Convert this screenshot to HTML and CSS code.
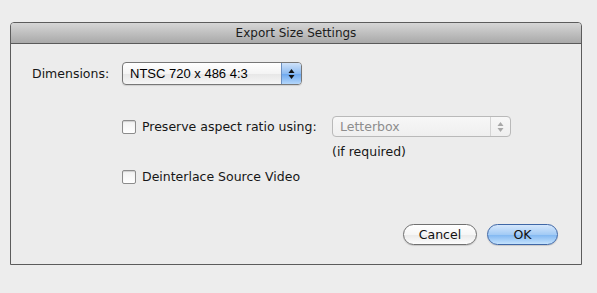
FILE: index.html
```html
<!DOCTYPE html>
<html lang="en">
<head>
    <meta charset="UTF-8">
    <title>Export Size Settings</title>
    <link rel="stylesheet" href="styles.css">
</head>
<body>
    <div class="window">
        <div class="titlebar">Export Size Settings</div>

        <div class="content">
            <div class="dims-row">
                <label class="dims-label">Dimensions:</label>
                <div class="popup">
                    <span class="popup-text">NTSC 720 x 486 4:3</span>
                    <span class="stepper">
                        <svg width="7" height="12" viewBox="0 0 7 12">
                            <path d="M3.5 1 L6.5 5 L0.5 5 Z" fill="#111"/>
                            <path d="M3.5 11 L6.5 7 L0.5 7 Z" fill="#111"/>
                        </svg>
                    </span>
                </div>
            </div>

            <div class="options">
                <label class="check">
                    <span class="box"></span>
                    Preserve aspect ratio using:
                </label>
                <div class="popup disabled">
                    <span class="popup-text">Letterbox</span>
                    <span class="stepper">
                        <svg width="7" height="12" viewBox="0 0 7 12">
                            <path d="M3.5 1 L6.5 5 L0.5 5 Z" fill="#a8a8a8"/>
                            <path d="M3.5 11 L6.5 7 L0.5 7 Z" fill="#a8a8a8"/>
                        </svg>
                    </span>
                </div>
                <div></div>
                <div class="hint">(if required)</div>
                <label class="check second">
                    <span class="box"></span>
                    Deinterlace Source Video
                </label>
            </div>

            <div class="buttons">
                <button class="btn">Cancel</button>
                <button class="btn default">OK</button>
            </div>
        </div>
    </div>
</body>
</html>
```

FILE: styles.css
```css
body {
    margin: 0;
    padding: 22px 0 0 10px;
    background-color: #ededed;
    font-family: "DejaVu Sans", sans-serif;
    font-size: 12.5px;
    color: #161616;
}
.window {
    width: 572px;
    height: 243px;
    box-sizing: border-box;
    border: 1px solid #5c5c5c;
    border-radius: 4px 4px 0 0;
    background-color: #ececec;
    display: flex;
    flex-direction: column;
}
.titlebar {
    height: 20px;
    line-height: 21px;
    font-size: 12px;
    text-align: center;
    border-bottom: 1px solid #5a5a5a;
    border-radius: 3px 3px 0 0;
    background: linear-gradient(#d6d6d6, #a9a9a9);
    color: #1c1c1c;
}
.content {
    flex: 1;
    display: flex;
    flex-direction: column;
}
.dims-row {
    display: flex;
    align-items: center;
    margin-top: 18px;
    height: 23px;
}
.dims-label {
    width: 90px;
    padding-left: 21px;
}
.popup {
    box-sizing: border-box;
    width: 180px;
    height: 23px;
    display: flex;
    align-items: center;
    border: 1px solid #777;
    border-radius: 4px;
    background: linear-gradient(#ffffff, #f4f4f4 50%, #e6e6e6 51%, #f6f6f6);
    box-shadow: 0 1px 1px rgba(0,0,0,0.12);
    overflow: hidden;
}
.popup-text {
    flex: 1;
    padding-left: 7px;
    font-family: "Liberation Sans", Arial, sans-serif;
    font-size: 13px;
    color: #000;
}
.stepper {
    width: 19px;
    height: 100%;
    display: flex;
    align-items: center;
    justify-content: center;
    border-left: 1px solid #6b8fc0;
    background: linear-gradient(#cfe2f9, #8dbbf1 50%, #6aa6ee 51%, #b4d7fb);
}
.popup.disabled {
    width: 179px;
    height: 21px;
    border-color: #b9b9b9;
    background: linear-gradient(#f7f7f7, #efefef);
    box-shadow: none;
}
.popup.disabled .popup-text {
    font-family: "DejaVu Sans", sans-serif;
    font-size: 12.5px;
    color: #8d8d8d;
}
.popup.disabled .stepper {
    border-left: 1px solid #d4d4d4;
    background: none;
}
.options {
    display: grid;
    grid-template-columns: 210px 179px;
    margin: 31px 0 0 111px;
    align-items: center;
}
.check {
    display: flex;
    align-items: center;
    gap: 6px;
}
.box {
    box-sizing: border-box;
    width: 14px;
    height: 14px;
    border: 1px solid #8c8c8c;
    border-radius: 2px;
    background: linear-gradient(#f2f2f2, #ffffff);
    box-shadow: inset 0 1px 1px rgba(0,0,0,0.15);
}
.hint {
    margin-top: 7px;
    line-height: 16px;
}
.check.second {
    grid-column: 1 / 3;
    margin-top: 9px;
    line-height: 16px;
}
.buttons {
    margin-top: auto;
    padding: 0 23px 19px 0;
    display: flex;
    justify-content: flex-end;
    gap: 10px;
}
.btn {
    box-sizing: border-box;
    height: 21px;
    border: 1px solid #707070;
    border-radius: 11px;
    background: linear-gradient(#ffffff, #f6f6f6 50%, #e9e9e9 51%, #fdfdfd);
    box-shadow: 0 1px 1px rgba(0,0,0,0.15);
    font-family: "DejaVu Sans", sans-serif;
    font-size: 12.5px;
    color: #111;
    padding: 0;
    width: 74px;
}
.btn.default {
    width: 71px;
    border-color: #3f67a6;
    background: linear-gradient(#d5e7fc, #a3cbf5 50%, #7fb6f1 51%, #c4e2fd);
}
```
